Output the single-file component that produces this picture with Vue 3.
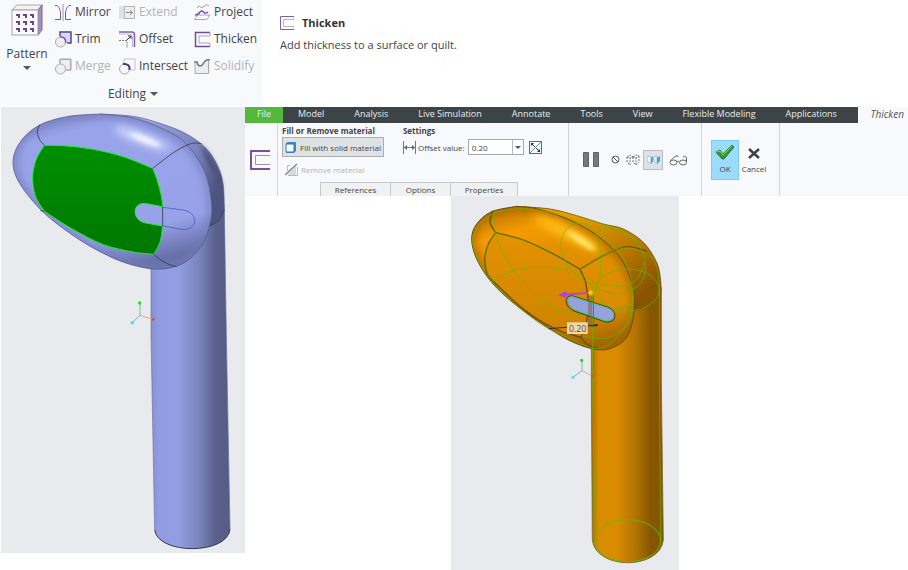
<script setup>
import { ref } from 'vue'

const offset = ref('0.20')

const commands = [
  { name: 'Mirror', icon: 'mirror' },
  { name: 'Extend', icon: 'extend', disabled: true },
  { name: 'Project', icon: 'project' },
  { name: 'Trim', icon: 'trim' },
  { name: 'Offset', icon: 'offset' },
  { name: 'Thicken', icon: 'thicken' },
  { name: 'Merge', icon: 'merge', disabled: true },
  { name: 'Intersect', icon: 'intersect' },
  { name: 'Solidify', icon: 'solidify', disabled: true },
]

const menus = ['Model', 'Analysis', 'Live Simulation', 'Annotate', 'Tools', 'View', 'Flexible Modeling', 'Applications']
const panels = ['References', 'Options', 'Properties']

// Smooth curve through a flat list of x, y pairs
function curve(list, joined = false) {
  const p = []
  for (let i = 0; i < list.length; i += 2) p.push([list[i], list[i + 1]])
  let d = (joined ? 'L' : 'M') + p[0].join(' ')
  for (let i = 0; i < p.length - 1; i++) {
    const a = p[i - 1] || p[i]
    const b = p[i]
    const c = p[i + 1]
    const e = p[i + 2] || c
    const x1 = b[0] + (c[0] - a[0]) / 6
    const y1 = b[1] + (c[1] - a[1]) / 6
    const x2 = c[0] - (e[0] - b[0]) / 6
    const y2 = c[1] - (e[1] - b[1]) / 6
    d += `C${x1.toFixed(1)} ${y1.toFixed(1)} ${x2.toFixed(1)} ${y2.toFixed(1)} ${c[0]} ${c[1]}`
  }
  return d
}

const blue = {
  back: curve([300, 30, 400, 37, 480, 58, 560, 90, 620, 135, 655, 190, 670, 245, 673, 318]) + curve([673, 318, 655, 350, 627, 367], true) + 'L500 300Z',
  tube: 'M453 440L673 300L679 690L690 1275C684 1353 474 1353 464 1278L453 690Z',
  head: curve([300, 30, 200, 38, 115, 65, 60, 115, 39, 175, 60, 240, 130, 325, 220, 395, 300, 443, 380, 478, 460, 495, 525, 488, 572, 462, 610, 415, 630, 360, 635, 300, 615, 205, 562, 123, 500, 80, 400, 42, 300, 30]) + 'Z',
  face: curve([133, 124, 200, 126, 280, 136, 370, 158, 458, 193])
    + curve([458, 193, 472, 230, 484, 275, 488, 308], true)
    + 'L440 299C395 292 395 345 432 356L488 366'
    + curve([488, 366, 480, 415, 461, 451], true)
    + curve([461, 451, 400, 444, 310, 422, 215, 374, 133, 322], true)
    + curve([133, 322, 106, 276, 98, 220, 108, 168, 133, 124], true) + 'Z',
  lines: [
    curve([133, 124, 118, 105, 112, 80, 120, 62]),
    curve([458, 193, 520, 146, 562, 123, 585, 117, 605, 119]),
    curve([461, 451, 495, 476, 530, 488]),
    curve([133, 322, 121, 320]),
    curve([673, 318, 655, 350, 627, 367]),
    'M488 308L488 366',
  ],
}

const gold = {
  tube: 'M424 400L634 280L634 570L640 1038C630 1129 437 1129 427 1038L424 570Z',
  back: curve([200, 37, 300, 45, 380, 65, 460, 90, 520, 105, 580, 145, 620, 205, 632, 260, 632, 300]) + curve([632, 300, 605, 335, 550, 352], true) + 'L420 300Z',
  head: curve([200, 37, 125, 53, 80, 90, 65, 135, 80, 195, 125, 265, 200, 335, 300, 405, 370, 445, 440, 467, 490, 460, 530, 430, 550, 370, 552, 300, 530, 225, 490, 167, 420, 110, 340, 70, 260, 44, 200, 37]) + 'Z',
  face: curve([137, 116, 220, 138, 310, 180, 390, 226])
    + curve([390, 226, 408, 270, 415, 340, 408, 390, 392, 430], true)
    + curve([392, 430, 310, 402, 220, 345, 128, 260], true)
    + curve([128, 260, 110, 235, 105, 190, 115, 150, 137, 116], true) + 'Z',
  dark: [
    curve([137, 116, 120, 85, 128, 50]),
    curve([390, 226, 460, 185, 530, 158, 590, 172]),
    curve([392, 430, 415, 454, 446, 464]),
  ],
  green: [
    curve([134, 55, 220, 44, 320, 60, 420, 102, 500, 165, 540, 240, 548, 320, 530, 390, 490, 440, 440, 464, 365, 437, 260, 382, 130, 268, 73, 170, 77, 105, 134, 55]),
    curve([134, 55, 127, 85, 137, 116, 165, 190, 230, 275, 320, 347, 430, 360, 545, 330]),
    curve([128, 262, 190, 230, 270, 220, 360, 230, 440, 265, 510, 277, 560, 256, 584, 205]),
    curve([137, 118, 220, 140, 310, 183, 390, 228]),
    curve([137, 116, 109, 170, 111, 230, 128, 260]),
    curve([427, 275, 360, 225, 333, 155, 352, 103, 400, 88, 438, 120, 452, 180, 450, 260]),
    curve([380, 65, 460, 91, 520, 115, 570, 157, 586, 218, 570, 270, 510, 300, 450, 287, 427, 260]),
    curve([390, 226, 460, 185, 520, 162, 575, 172, 615, 202]),
    curve([392, 425, 470, 432, 530, 395, 548, 350]),
    curve([440, 100, 520, 115, 590, 166, 622, 225, 628, 300]),
  ],
}
</script>

<template>
  <main class="page">
    <div class="top">
      <section class="editing" aria-label="Editing">
        <div class="tools">
          <button class="pattern" type="button">
            <svg width="32" height="32" viewBox="0 0 32 32">
              <path d="M1 6L6 1H32L27 6Z" fill="#f3f3f6" stroke="#aaa" />
              <path d="M27 6L31 1V26L27 31Z" fill="#a68bc4" stroke="#7e6994" />
              <rect x="1" y="6" width="26" height="25" fill="#fafafc" stroke="#a5a2aa" />
              <g v-for="r in 3" :key="r">
                <path v-for="c in 3" :key="c" :d="`M${c * 7 - 2} ${r * 7 + 3}h4v4h-2v-2h-2z`" fill="#674392" />
              </g>
            </svg>
            <span>Pattern</span>
            <i class="arrow"></i>
          </button>
          <div class="commands">
            <button v-for="c in commands" :key="c.name" class="command" type="button" :disabled="c.disabled">
              <svg width="17" height="17" viewBox="0 0 17 17" fill="none">
                <template v-if="c.icon === 'mirror'">
                  <path d="M0 1.500H2C5 4 5.500 7 5.500 10V15.500H0" stroke="#75589c" />
                  <path d="M16 1.500H14C11 4 10.500 7 10.500 10V15.500H16" stroke="#75589c" />
                  <path d="M8 0V17" stroke="#999" />
                </template>
                <template v-else-if="c.icon === 'extend'">
                  <rect x="0" y="2" width="5" height="13" fill="#e2e2e2" />
                  <rect x="5.500" y="2.500" width="10" height="12" fill="#eee" stroke="#b5b5b5" />
                  <path d="M7 8.500H13M11 6L13.500 8.500L11 11" stroke="#888" />
                </template>
                <template v-else-if="c.icon === 'project'">
                  <path d="M3 4C6 0 6 5 9 3S13 0 15 2" stroke="#999" />
                  <path d="M0 15.500L4 11H16L13 15.500Z" stroke="#aaa" />
                  <path d="M1 11C7 11 5 6 8 7S10 11 14 8" stroke="#7650a2" stroke-width="1.500" />
                </template>
                <template v-else-if="c.icon === 'trim'">
                  <path d="M5 1H16V12H11C12 7 9 5 5 5Z" fill="#cddcff" />
                  <path d="M5 5V1H16V12H12" stroke="#5b4387" stroke-width="1.500" />
                  <circle cx="5.500" cy="11" r="5" fill="#eeeef1" stroke="#aaa" />
                  <path d="M5 6C9 5.500 11.500 8 10.500 12" stroke="#8b4ab1" stroke-width="1.500" />
                </template>
                <template v-else-if="c.icon === 'offset'">
                  <path d="M0 1H13Q15.500 1 15.500 4V16" stroke="#8063a1" stroke-width="1.500" />
                  <path d="M0 3H11Q13.500 3 13.500 6V16" stroke="#c3b3d5" />
                  <path d="M0 9.500H8V17" stroke="#777" stroke-dasharray="2 1" />
                  <path d="M8 9L12 5M9 5H12V8" stroke="#333" />
                </template>
                <template v-else-if="c.icon === 'thicken'">
                  <path d="M16 1.500H1.500V15.500H16" stroke="#6f4d99" stroke-width="1.500" />
                  <path d="M16 1V5H5V12H16V16" stroke="#aaa" />
                </template>
                <template v-else-if="c.icon === 'merge'">
                  <path d="M5 5V1H16V12H12" fill="#eee" stroke="#aaa" />
                  <circle cx="5.500" cy="11" r="5" fill="#f0f0f0" stroke="#aaa" />
                  <path d="M5 6V1.500H15.500V12H11" stroke="#aaa" />
                </template>
                <template v-else-if="c.icon === 'intersect'">
                  <path d="M5 5V1H16V12H12" stroke="#c4c4c8" />
                  <circle cx="5.500" cy="11" r="5" stroke="#aaa" />
                  <path d="M4 6C9 5.500 11 8 10.500 12" stroke="#56347e" stroke-width="2" />
                </template>
                <template v-else>
                  <path d="M1 16V4C4 2 4 10 8 7C12 3 11 1 16 2V16Z" fill="#ededed" />
                  <path d="M0 4H3C4 9 7 9 9 6S12 1 16 2" stroke="#777" stroke-width="1.500" />
                  <path d="M1 4V15.500H14.500V3" stroke="#aaa" />
                </template>
              </svg>
              <span>{{ c.name }}</span>
            </button>
          </div>
        </div>
        <button class="group-name" type="button">Editing <i class="arrow"></i></button>
      </section>

      <section class="help">
        <h1>
          <svg width="14" height="14" viewBox="0 0 14 14" fill="none">
            <path d="M14 .5H.5V13.500H14" stroke="#7e60a3" />
            <path d="M14 1V3.500H3.500V10.500H14V13" stroke="#b5b8b3" />
          </svg>
          Thicken
        </h1>
        <p>Add thickness to a surface or quilt.</p>
      </section>
    </div>

    <div class="work">
      <svg class="view view-blue" viewBox="3 9 732 1338" role="img" aria-label="Surface model">
        <defs>
          <linearGradient id="blueTube">
            <stop offset="0" stop-color="#8791d0" /><stop offset=".1" stop-color="#919ce2" />
            <stop offset=".35" stop-color="#929de2" /><stop offset=".6" stop-color="#7b86bf" />
            <stop offset=".82" stop-color="#59608c" /><stop offset="1" stop-color="#555c86" />
          </linearGradient>
          <linearGradient id="blueBack" x1="0" y1=".1" x2="1" y2=".5">
            <stop offset=".3" stop-color="#98a3e5" /><stop offset=".75" stop-color="#7983be" /><stop offset="1" stop-color="#4d547e" />
          </linearGradient>
          <linearGradient id="blueHead" x1=".2" y1="0" x2=".55" y2="1">
            <stop offset="0" stop-color="#7f89c5" /><stop offset=".13" stop-color="#99a3ea" />
            <stop offset=".8" stop-color="#98a2e8" /><stop offset="1" stop-color="#6670aa" />
          </linearGradient>
          <linearGradient id="greenFace" x1="0" y1="0" x2="0" y2="1">
            <stop offset="0" stop-color="#009000" /><stop offset="1" stop-color="#007700" />
          </linearGradient>
          <filter id="soft" x="-50%" y="-100%" width="200%" height="300%"><feGaussianBlur stdDeviation="12" /></filter>
          <filter id="glint" x="-50%" y="-100%" width="200%" height="300%"><feGaussianBlur stdDeviation="6" /></filter>
          <clipPath id="blueClip"><path :d="blue.head" /></clipPath>
        </defs>
        <path :d="blue.tube" fill="url(#blueTube)" />
        <path d="M464 1278C474 1353 684 1353 690 1275" fill="none" stroke="#343954" stroke-width="3" />
        <path d="M453 470V690L464 1278M673 318L679 690L690 1275" fill="none" stroke="#6d73a0" stroke-width="2" />
        <path :d="blue.back" fill="url(#blueBack)" stroke="#5c648f" stroke-width="2" />
        <path d="M600 120Q650 165 668 260Q650 215 625 180Z" fill="#4a5077" filter="url(#glint)" />
        <path :d="blue.head" fill="url(#blueHead)" />
        <g clip-path="url(#blueClip)">
          <path :d="blue.head" fill="none" stroke="#727bb9" stroke-width="18" filter="url(#soft)" />
          <ellipse cx="425" cy="103" rx="88" ry="16" transform="rotate(21 425 103)" fill="#d3dbff" filter="url(#soft)" />
          <ellipse cx="435" cy="107" rx="48" ry="7" transform="rotate(22 435 107)" fill="#fff" filter="url(#glint)" />
        </g>
        <path :d="blue.head" fill="none" stroke="#4c5379" stroke-width="2" />
        <path :d="blue.face" fill="url(#greenFace)" stroke="#25e93b" stroke-width="3" stroke-linejoin="round" />
        <g fill="none" stroke="#353956" stroke-width="2.500">
          <path v-for="d in blue.lines" :key="d" :d="d" />
        </g>
        <path d="M488 310L550 318C598 326 594 381 546 376L488 366" fill="none" stroke="#4363bd" stroke-width="2.500" />
        <g fill="none" stroke-width="3">
          <path d="M420 634V597" stroke="#70c886" /><path d="M420 634L397 656" stroke="#77b8d5" /><path d="M420 634L459 646" stroke="#d0ae91" />
        </g>
        <circle cx="419" cy="597" r="5" fill="#20dc2d" /><circle cx="397" cy="656" r="5" fill="#43dff0" />
        <path d="M454 646h10M459 641v10" stroke="#e43e38" stroke-width="3" />
      </svg>

      <div class="feature">
        <section class="dashboard">
          <nav class="menu">
            <button class="file" type="button">File</button>
            <button v-for="m in menus" :key="m" class="menu-item" type="button">{{ m }}</button>
            <span class="menu-end"></span>
            <button class="current" type="button">Thicken</button>
          </nav>
          <div class="options">
            <div class="type">
              <svg width="20" height="20" viewBox="0 0 20 20" fill="none">
                <path d="M20 1H1V19H20" stroke="#7950a0" stroke-width="2" />
                <path d="M20 5.500H5.500V14.500H20" stroke="#999" />
              </svg>
            </div>
            <div class="settings">
              <div class="groups">
                <div class="group">
                  <h2>Fill or Remove material</h2>
                  <button class="fill" type="button">
                    <svg width="11" height="11" viewBox="0 0 11 11">
                      <path d="M1 1L3 0H11V9L9 11H1Z" fill="#3a8cc2" />
                      <rect x="1" y="2" width="8" height="8" rx="1" fill="#f3fbff" stroke="#3274a8" />
                    </svg>
                    Fill with solid material
                  </button>
                  <button class="remove" type="button" disabled>
                    <svg width="13" height="13" viewBox="0 0 13 13">
                      <path d="M2 12L11 3V12Z" fill="#d8dadb" /><path d="M5 2.500H2.500V8M12.500 4V12.500H3" fill="none" stroke="#bbb" /><path d="M0 12L12 1" stroke="#888" stroke-width="1.500" />
                    </svg>
                    Remove material
                  </button>
                </div>
                <div class="group">
                  <h2>Settings</h2>
                  <div class="field">
                    <svg width="13" height="13" viewBox="0 0 13 13" fill="none" stroke="#777">
                      <path d="M.5 0V13M12.500 0V13M1 6.500H12" /><path d="M4 4L1 6.500L4 9ZM9 4L12 6.500L9 9Z" fill="#666" stroke="none" />
                    </svg>
                    <label for="offset">Offset value:</label>
                    <div class="combo">
                      <input id="offset" v-model="offset" type="text">
                      <button type="button" aria-label="Recent values"><i class="arrow small"></i></button>
                    </div>
                    <button class="flip" type="button" aria-label="Flip direction">
                      <svg width="13" height="13" viewBox="0 0 13 13" fill="none">
                        <rect x=".5" y=".5" width="12" height="12" fill="#f4faff" stroke="#397aa0" />
                        <path d="M1 12L12 1" stroke="#5a93b4" />
                        <path d="M3 3L6 6M7 7L10 10" stroke="#333" />
                        <path d="M2 2H5L2 5ZM11 11V8L8 11Z" fill="#333" />
                      </svg>
                    </button>
                  </div>
                </div>
              </div>
              <div class="panels">
                <button v-for="p in panels" :key="p" type="button">{{ p }}</button>
              </div>
            </div>
            <div class="preview">
              <button type="button" aria-label="Pause">
                <svg width="16" height="15" viewBox="0 0 16 15"><path d="M.5 .5h5v14h-5zM10.500 .5h5v14h-5z" fill="#78787b" stroke="#606063" /></svg>
              </button>
              <button type="button" aria-label="No preview">
                <svg width="9" height="9" viewBox="0 0 9 9" fill="none" stroke="#555"><circle cx="4.500" cy="4.500" r="3.500" /><path d="M2 2L7 7" /></svg>
              </button>
              <button type="button" aria-label="Wireframe preview">
                <svg width="14" height="14" viewBox="0 0 14 14" fill="none" stroke="#777">
                  <path d="M1 4L4 2L7 4L4 5ZM1 4V9L4 12V5M7 4L10 2L13 3L10 5ZM7 4V9L10 12V5M13 3V9L10 12" stroke-dasharray="2 1" />
                </svg>
              </button>
              <button class="pressed" type="button" aria-label="Shaded preview">
                <svg width="13" height="12" viewBox="0 0 13 12">
                  <path d="M0 3L3 2L4 4V10L0 7Z" fill="#edfaff" stroke="#a8bcc5" /><path d="M4 4L6 2V7L4 10Z" fill="#35a5df" />
                  <path d="M7 3L10 2L10 4V10L7 7Z" fill="#edfaff" stroke="#a8bcc5" /><path d="M10 4L13 2V7L10 10Z" fill="#35a5df" />
                </svg>
              </button>
              <button class="glasses" type="button" aria-label="Verify">
                <svg width="19" height="12" viewBox="0 0 19 12" fill="none" stroke="#666">
                  <ellipse cx="4.500" cy="8.500" rx="3.500" ry="2.500" /><ellipse cx="14" cy="8.500" rx="3.500" ry="2.500" />
                  <path d="M8 8Q9.500 6 10.500 8M1 8Q3 4 7 2Q9 1 9 3M17.500 8V4Q17 1 14 3" />
                </svg>
              </button>
            </div>
            <div class="finish">
              <button class="ok" type="button">
                <svg width="20" height="16" viewBox="0 0 20 16">
                  <path d="M1 8L5 6L8 10L17 1L19 3L9 15H7Z" fill="#32953b" stroke="#297b35" />
                  <path d="M2 8L5 7L8 11L17 2" fill="none" stroke="#b5cf38" />
                </svg>
                OK
              </button>
              <button class="cancel" type="button">
                <svg width="14" height="16" viewBox="0 0 14 16"><path d="M2 5L12 14M12 5L2 14" stroke="#3d4245" stroke-width="2.500" /></svg>
                Cancel
              </button>
            </div>
          </div>
        </section>

        <svg class="view view-gold" viewBox="3 6 684 1122" role="img" aria-label="Thickened model, offset 0.20">
          <defs>
            <linearGradient id="goldTube">
              <stop offset="0" stop-color="#a86c00" /><stop offset=".1" stop-color="#da8c00" />
              <stop offset=".35" stop-color="#d98c00" /><stop offset=".62" stop-color="#b17300" />
              <stop offset=".83" stop-color="#855500" /><stop offset="1" stop-color="#875600" />
            </linearGradient>
            <linearGradient id="goldBack" x1=".2" y1="0" x2="1" y2=".7">
              <stop offset=".2" stop-color="#e89b00" /><stop offset=".65" stop-color="#bb7800" /><stop offset="1" stop-color="#875400" />
            </linearGradient>
            <linearGradient id="goldHead" x1=".3" y1="0" x2=".6" y2="1">
              <stop offset="0" stop-color="#c47b00" /><stop offset=".15" stop-color="#f49b00" />
              <stop offset=".35" stop-color="#e29000" /><stop offset=".8" stop-color="#da8c00" /><stop offset="1" stop-color="#a66900" />
            </linearGradient>
            <linearGradient id="goldFace" x1="0" y1="0" x2="0" y2="1">
              <stop offset="0" stop-color="#e49200" /><stop offset="1" stop-color="#cd8300" />
            </linearGradient>
            <clipPath id="goldClip"><path :d="gold.head" /></clipPath>
          </defs>
          <path :d="gold.tube" fill="url(#goldTube)" stroke="#8f6334" stroke-width="2.500" />
          <path :d="gold.back" fill="url(#goldBack)" stroke="#825300" stroke-width="2.500" />
          <path :d="gold.head" fill="url(#goldHead)" />
          <g clip-path="url(#goldClip)">
            <path :d="gold.head" fill="none" stroke="#9e6200" stroke-width="18" filter="url(#soft)" />
            <ellipse cx="350" cy="116" rx="112" ry="18" transform="rotate(27 350 116)" fill="#ffbd17" filter="url(#soft)" />
            <ellipse cx="394" cy="140" rx="50" ry="9" transform="rotate(34 394 140)" fill="#ffed6f" filter="url(#glint)" />
          </g>
          <path :d="gold.head" fill="none" stroke="#734611" stroke-width="3" />
          <path :d="gold.face" fill="url(#goldFace)" stroke="#704b00" stroke-width="4" />
          <g fill="none" stroke="#704b00" stroke-width="4">
            <path v-for="d in gold.dark" :key="d" :d="d" />
          </g>
          <g fill="none" stroke="#5bbd08" stroke-width="2">
            <path v-for="d in gold.green" :key="d" :d="d" />
            <ellipse cx="533" cy="288" rx="95" ry="63" />
            <path d="M428 280V570L436 1040M628 280V570L632 1040" />
            <ellipse cx="533" cy="1040" rx="99" ry="63" stroke-width="3" />
          </g>
          <path d="M370 306L473 339C506 352 500 389 466 384L372 351C343 339 339 300 370 306Z" fill="#c18310" stroke="#493f1b" stroke-width="3" />
          <path d="M370 309L473 342C502 354 494 386 462 379L375 347C350 336 345 304 370 309Z" fill="#98a2da" stroke="#2bcf9c" stroke-width="3" />
          <path d="M417 305V400M423 305V400M430 305V400" stroke="#68634b" stroke-width="3" />
          <path d="M296 404L440 393" stroke="#36304c" stroke-width="3" /><path d="M421 397L443 389V397Z" fill="#30304c" />
          <path d="M422 296L345 302" stroke="#b53ee1" stroke-width="5" /><path d="M324 303L351 292L348 312Z" fill="#b53ee1" />
          <circle cx="422" cy="296" r="7" fill="#ffc61c" stroke="#dfab00" stroke-width="3" />
          <rect x="351" y="385" width="62" height="35" fill="#efd8ad" />
          <text x="357" y="413" class="dimension">0.20</text>
          <g fill="none" stroke-width="3">
            <path d="M396 530V500" stroke="#70c886" /><path d="M396 530L369 550" stroke="#77b8d5" /><path d="M396 530L426 546" stroke="#d0ae91" />
          </g>
          <circle cx="395" cy="499" r="5" fill="#20dc2d" /><circle cx="369" cy="550" r="5" fill="#63dff7" /><circle cx="426" cy="546" r="3" fill="#e43e38" />
        </svg>
      </div>
    </div>
  </main>
</template>

<style>
body { background: #fff; }
</style>

<style scoped>
.page { font-family: "Open Sans", "Noto Sans", sans-serif; color: #444; }
.page *, .page { box-sizing: border-box; }
button { display: flex; align-items: center; margin: 0; padding: 0; border: 0; background: none; color: inherit; font: inherit; white-space: nowrap; }
svg { display: block; flex: none; }
h1, h2, p { margin: 0; }
.arrow { width: 0; height: 0; border: 4px solid transparent; border-top-color: #555; border-bottom: 0; }
.arrow.small { border-width: 3px; border-bottom: 0; }

.top { display: flex; }
.editing { display: flex; flex-direction: column; align-items: center; flex: none; width: 262px; height: 105px; margin-bottom: 2px; background: #f8f9fb; font-size: 12px; }
.tools { display: flex; align-items: flex-start; width: 100%; height: 84px; padding-left: 6px; }
.pattern { flex-direction: column; width: 42px; margin-right: 7px; padding-top: 4px; line-height: 16px; }
.pattern span { margin: 10px 0 4px; }
.commands { display: grid; grid-template-columns: 64px 75px 68px; grid-auto-rows: 27px; }
.command { gap: 3px; line-height: 16px; padding-bottom: 3px; }
.command:disabled { color: #b3b3b5; }
.group-name { gap: 4px; padding-left: 4px; line-height: 20px; }
.help { padding: 15px 0 0 18px; font-size: 11px; line-height: 16px; }
.help h1 { display: flex; align-items: center; gap: 8px; color: #333; font-size: 11px; font-weight: 700; line-height: 16px; }
.help p { margin-top: 6px; }

.work { display: flex; align-items: flex-start; padding-left: 1px; }
.view { background: #e8eaee; }
.view-blue { flex: none; width: 244px; height: 446px; }
.feature { flex: 1; min-width: 0; }
.dashboard { background: #f8f9fc; font-size: 8px; }
.menu { display: flex; height: 16px; color: #e9eceb; font-size: 9px; line-height: 14px; }
.menu button { padding-bottom: 2px; }
.menu .file { flex: none; justify-content: center; width: 38px; background: #53b93e; }
.menu .menu-item { flex: none; padding: 0 15px 2px; background: #3c4447; }
.menu-end { width: 6px; background: #3c4447; }
.menu .current { flex: 1; justify-content: flex-end; padding-right: 4px; color: #555; font-size: 10px; font-style: italic; }
.options { display: flex; height: 73px; }
.options > div { border-right: 1px solid #d2d4d8; }
.type { display: flex; align-items: center; width: 33px; padding-left: 5px; }
.settings { display: flex; flex-direction: column; justify-content: space-between; width: 291px; }
.groups { display: flex; gap: 19px; padding: 2px 0 0 4px; }
h2 { font-size: 8px; font-weight: 700; line-height: 12px; }
.fill { gap: 4px; height: 20px; padding: 0 2px; border: 1px solid #adafb1; background: #dfe2e4; }
.remove { gap: 3px; height: 20px; padding-left: 3px; margin-top: 2px; color: #b1b3b6; }
.field { display: flex; align-items: center; gap: 2px; height: 20px; }
.combo { display: flex; width: 56px; height: 16px; margin-left: 1px; border: 1px solid #a5a7aa; background: #fff; }
.combo input { min-width: 0; flex: 1; padding: 0 3px; border: 0; background: none; color: #444; font: inherit; }
.combo button { justify-content: center; width: 11px; border-left: 1px solid #b7b9bc; }
.flip { margin-left: 3px; }
.panels { display: flex; padding-left: 42px; line-height: 11px; }
.panels button { justify-content: center; width: 71px; height: 14px; padding-bottom: 1px; border: 1px solid #c6c8cb; border-bottom: 0; background: #eff1f3; }
.panels button + button { width: 60px; border-left: 0; }
.panels button:last-child { width: 67px; }
.preview { display: flex; align-items: center; width: 133px; padding-left: 14px; }
.preview button { margin-right: 6px; }
.preview button:first-child { margin-right: 12px; }
.preview .pressed { justify-content: center; width: 20px; height: 20px; margin-left: -3px; border: 1px solid #b9bcbe; background: #dfe2e4; }
.finish { display: flex; align-items: center; width: 78px; padding-left: 9px; }
.finish button { flex-direction: column; justify-content: center; gap: 3px; width: 28px; height: 40px; line-height: 12px; }
.finish .ok { border: 1px solid #7bcdf6; background: #9bdcfd; }
.finish .cancel { margin-left: 1px; }
.view-gold { width: 228px; height: 374px; margin-left: 206px; }
.dimension { fill: #514943; font-family: "Open Sans", sans-serif; font-size: 26px; }
</style>
